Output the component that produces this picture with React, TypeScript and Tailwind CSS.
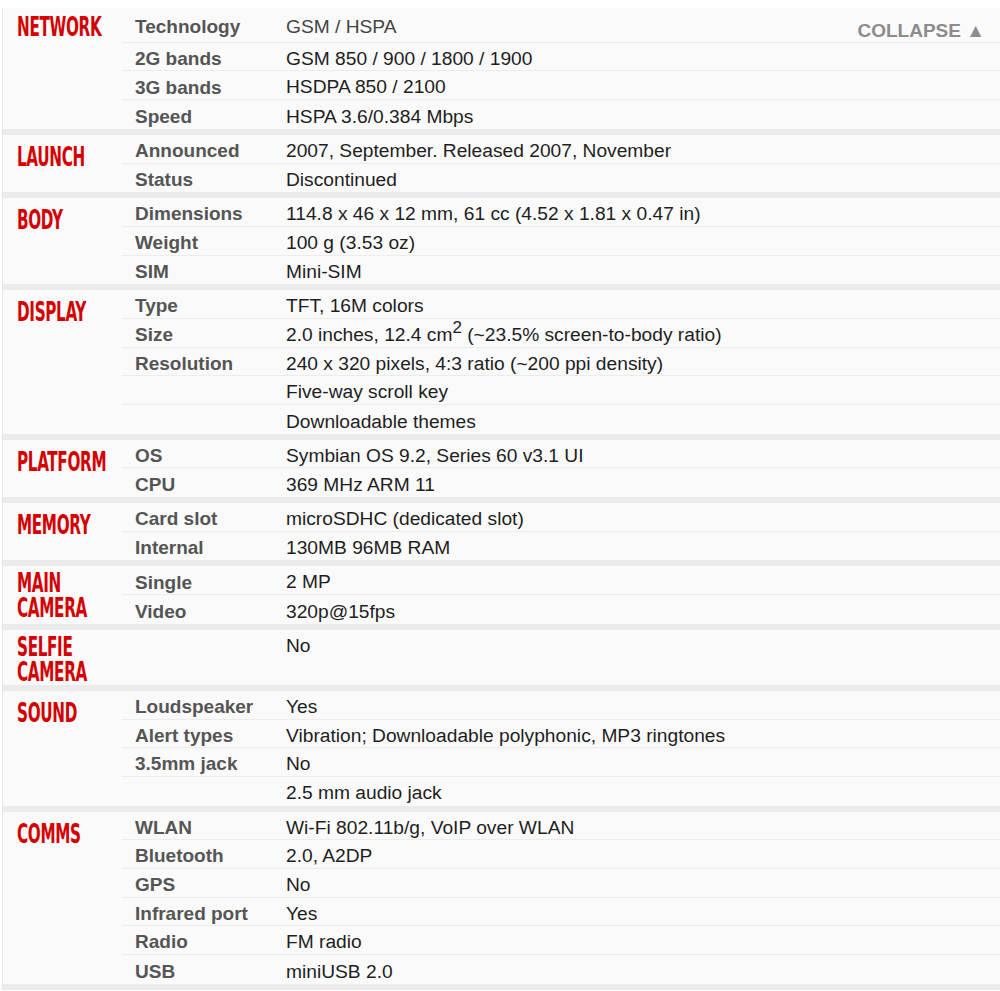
import React from "react";

type Row = { label?: string; value: React.ReactNode; light?: boolean };
type Section = { title: string[]; rows: Row[]; first?: boolean };

const sections: Section[] = [
  {
    title: ["NETWORK"],
    first: true,
    rows: [
      { label: "Technology", value: "GSM / HSPA", light: true },
      { label: "2G bands", value: "GSM 850 / 900 / 1800 / 1900" },
      { label: "3G bands", value: "HSDPA 850 / 2100" },
      { label: "Speed", value: "HSPA 3.6/0.384 Mbps" },
    ],
  },
  {
    title: ["LAUNCH"],
    rows: [
      { label: "Announced", value: "2007, September. Released 2007, November" },
      { label: "Status", value: "Discontinued" },
    ],
  },
  {
    title: ["BODY"],
    rows: [
      { label: "Dimensions", value: "114.8 x 46 x 12 mm, 61 cc (4.52 x 1.81 x 0.47 in)" },
      { label: "Weight", value: "100 g (3.53 oz)" },
      { label: "SIM", value: "Mini-SIM" },
    ],
  },
  {
    title: ["DISPLAY"],
    rows: [
      { label: "Type", value: "TFT, 16M colors" },
      {
        label: "Size",
        value: (
          <>
            2.0 inches, 12.4 cm<sup className="top-[-0.45em] text-[17px]">2</sup> (~23.5% screen-to-body ratio)
          </>
        ),
      },
      { label: "Resolution", value: "240 x 320 pixels, 4:3 ratio (~200 ppi density)" },
      { value: "Five-way scroll key" },
      { value: "Downloadable themes" },
    ],
  },
  {
    title: ["PLATFORM"],
    rows: [
      { label: "OS", value: "Symbian OS 9.2, Series 60 v3.1 UI" },
      { label: "CPU", value: "369 MHz ARM 11" },
    ],
  },
  {
    title: ["MEMORY"],
    rows: [
      { label: "Card slot", value: "microSDHC (dedicated slot)" },
      { label: "Internal", value: "130MB 96MB RAM" },
    ],
  },
  {
    title: ["MAIN", "CAMERA"],
    rows: [
      { label: "Single", value: "2 MP" },
      { label: "Video", value: "320p@15fps" },
    ],
  },
  {
    title: ["SELFIE", "CAMERA"],
    rows: [{ value: "No" }],
  },
  {
    title: ["SOUND"],
    rows: [
      { label: "Loudspeaker", value: "Yes" },
      { label: "Alert types", value: "Vibration; Downloadable polyphonic, MP3 ringtones" },
      { label: "3.5mm jack", value: "No" },
      { value: "2.5 mm audio jack" },
    ],
  },
  {
    title: ["COMMS"],
    rows: [
      { label: "WLAN", value: "Wi-Fi 802.11b/g, VoIP over WLAN" },
      { label: "Bluetooth", value: "2.0, A2DP" },
      { label: "GPS", value: "No" },
      { label: "Infrared port", value: "Yes" },
      { label: "Radio", value: "FM radio" },
      { label: "USB", value: "miniUSB 2.0" },
    ],
  },
];

function Header({ title, first }: { title: string[]; first?: boolean }) {
  const two = title.length > 1;
  return (
    <div
      className={
        "w-[119px] shrink-0 pl-[14px] text-[26px] text-[#d50000] " +
        (two ? "pt-[5px] leading-[25px]" : first ? "pt-[6px] leading-[26px]" : "pt-[9px] leading-[26px]")
      }
      style={{ fontFamily: '"Liberation Sans Narrow", "DejaVu Sans Condensed", "Liberation Sans", sans-serif' }}
    >
      {title.map((t) => (
        <div key={t} className="whitespace-nowrap">
          <span className="inline-block origin-left font-bold tracking-[-0.5px] [transform:scaleX(0.65)]">{t}</span>
        </div>
      ))}
    </div>
  );
}

export default function App() {
  return (
    <div
      className="min-h-[991px] bg-white pt-[8px] pl-[2px]"
      style={{ fontFamily: '"Liberation Sans", Arial, sans-serif' }}
    >
      <div className="border-l border-[#e6e6e6] bg-[#fafafa]">
        {sections.map((s, i) => (
          <div key={i} className="border-b-[6px] border-[#ebebeb]">
            <div className="flex">
              <Header title={s.title} first={s.first} />
              <div className="flex flex-1 flex-col">
                {s.rows.map((r, j) => (
                  <div
                    key={j}
                    className={
                      "flex items-center border-b border-[#ececec] pt-[5px] text-[19.2px] last:border-b-0 " +
                      (s.first && j === 0 ? "h-[34.8px] pt-[2px]" : "h-[28.7px]")
                    }
                  >
                    <div className="w-[164px] shrink-0 pl-[13px] text-[19px] font-bold text-[#555555]">{r.label}</div>
                    <div className={"flex-1 " + (r.light ? "text-[#444444]" : "text-[#1e1e1e]")}>{r.value}</div>
                    {s.first && j === 0 && (
                      <div className="mt-[8px] pr-[15px] text-[19px] font-bold text-[#8c8c8c]">COLLAPSE ▲</div>
                    )}
                  </div>
                ))}
              </div>
            </div>
          </div>
        ))}
      </div>
    </div>
  );
}
